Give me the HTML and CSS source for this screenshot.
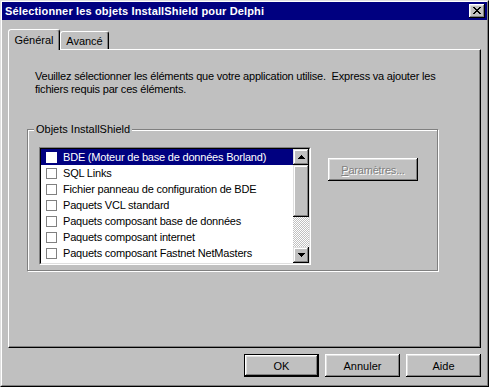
FILE: index.html
```html
<!DOCTYPE html>
<html lang="fr">
<head>
<meta charset="utf-8">
<title>Sélectionner les objets InstallShield pour Delphi</title>
<link rel="stylesheet" href="styles.css">
</head>
<body>
<div class="window">
  <div class="window-inner">
    <div class="titlebar">
      <span class="title">Sélectionner les objets InstallShield pour Delphi</span>
      <button class="close" type="button" aria-label="Fermer">
        <svg width="8" height="7" viewBox="0 0 8 7" shape-rendering="crispEdges"><path fill="#000" d="M0 0h2v1h-2z M6 0h2v1h-2z M1 1h2v1h-2z M5 1h2v1h-2z M2 2h4v1h-4z M3 3h2v1h-2z M2 4h4v1h-4z M1 5h2v1h-2z M5 5h2v1h-2z M0 6h2v1h-2z M6 6h2v1h-2z"/></svg>
      </button>
    </div>
    <div class="content">
      <div class="tabs">
        <div class="tab tab-active">Général</div>
        <div class="tab">Avancé</div>
      </div>
      <div class="panel">
        <p class="intro">Veuillez sélectionner les éléments que votre application utilise.&nbsp; Express va ajouter les<br>fichiers requis par ces éléments.</p>
        <fieldset class="group">
          <legend class="group-label">Objets InstallShield</legend>
          <div class="group-body">
            <div class="listbox">
              <ul class="items">
                <li class="item item-selected"><span class="check"></span>BDE (Moteur de base de données Borland)</li>
                <li class="item"><span class="check"></span>SQL Links</li>
                <li class="item"><span class="check"></span>Fichier panneau de configuration de BDE</li>
                <li class="item"><span class="check"></span>Paquets VCL standard</li>
                <li class="item"><span class="check"></span>Paquets composant base de données</li>
                <li class="item"><span class="check"></span>Paquets composant internet</li>
                <li class="item"><span class="check"></span>Paquets composant Fastnet NetMasters</li>
                <li class="item"><span class="check"></span>Paquets composant Decision Cube</li>
              </ul>
              <div class="scrollbar">
                <div class="sb-btn">
                  <svg width="7" height="4" viewBox="0 0 7 4" shape-rendering="crispEdges"><path fill="#000" d="M3 0h1v1h-1z M2 1h3v1h-3z M1 2h5v1h-5z M0 3h7v1h-7z"/></svg>
                </div>
                <div class="sb-thumb"></div>
                <div class="sb-track"></div>
                <div class="sb-btn">
                  <svg width="7" height="4" viewBox="0 0 7 4" shape-rendering="crispEdges"><path fill="#000" d="M0 0h7v1h-7z M1 1h5v1h-5z M2 2h3v1h-3z M3 3h1v1h-1z"/></svg>
                </div>
              </div>
            </div>
            <button class="btn btn-disabled params" type="button" disabled><span class="ul">P</span>aramètres...</button>
          </div>
        </fieldset>
      </div>
      <div class="actions">
        <button class="btn btn-default" type="button">OK</button>
        <button class="btn" type="button">Annuler</button>
        <button class="btn" type="button">Aide</button>
      </div>
    </div>
  </div>
</div>
</body>
</html>
```
FILE: styles.css
```css
* { box-sizing: border-box; }
html, body { margin: 0; padding: 0; background: #c0c0c0; }
body {
  font-family: "Liberation Sans", Arial, sans-serif;
  font-size: 11px;
  color: #000;
}
.window {
  width: 489px;
  height: 387px;
  border: 1px solid;
  border-color: #dfdfdf #000 #000 #dfdfdf;
  background: #c0c0c0;
}
.window-inner {
  height: 100%;
  border: 1px solid;
  border-color: #fff #808080 #808080 #fff;
  display: flex;
  flex-direction: column;
}
.titlebar {
  height: 18px;
  background: #000080;
  display: flex;
  align-items: center;
  justify-content: space-between;
  padding: 0 2px 0 3px;
}
.title {
  color: #fff;
  font-weight: bold;
  font-size: 11px;
  letter-spacing: 0.15px;
  white-space: nowrap;
}
.close {
  width: 16px;
  height: 14px;
  padding: 0;
  margin: 0;
  border: 0;
  background: #c0c0c0;
  box-shadow: inset -1px -1px 0 #000, inset 1px 1px 0 #fff, inset -2px -2px 0 #808080, inset 2px 2px 0 #dfdfdf;
  display: flex;
  align-items: center;
  justify-content: center;
  padding-bottom: 1px;
}
.close svg { display: block; }
.content {
  flex: 1;
  padding: 9px 6px 8px 6px;
  display: flex;
  flex-direction: column;
}
.tabs {
  height: 20px;
  display: flex;
  align-items: flex-end;
  position: relative;
  z-index: 1;
}
.tab {
  height: 18px;
  padding: 0 5px 0 5px;
  width: 49px;
  border: 1px solid;
  border-bottom: 0;
  border-color: #fff #000 transparent #fff;
  border-radius: 3px 3px 0 0;
  box-shadow: inset -1px 0 0 #808080;
  background: #c0c0c0;
  display: flex;
  align-items: center;
  justify-content: center;
  padding-top: 1px;
}
.tab-active {
  width: 52px;
  height: 21px;
  margin-bottom: -1px;
  padding-bottom: 2px;
}
.panel {
  height: 299px;
  border: 1px solid;
  border-color: #fff #000 #000 #fff;
  box-shadow: inset -1px -1px 0 #808080;
  padding: 20px 0 0 18px;
}
.intro {
  margin: 0 0 0 8px;
  line-height: 13px;
  letter-spacing: -0.2px;
  white-space: nowrap;
}
.group {
  margin: 27px 0 0 0;
  width: 411px;
  height: 148px;
  padding: 0;
  border: 1px solid #808080;
  box-shadow: inset 1px 1px 0 #fff, 1px 1px 0 #fff;
  min-width: 0;
}
.group-label {
  margin-left: 6px;
  padding: 0 2px;
  line-height: 13px;
  background: #c0c0c0;
}
.group-body {
  display: flex;
  align-items: flex-start;
  padding: 11px 0 0 11px;
}
.listbox {
  width: 272px;
  height: 118px;
  border: 1px solid;
  border-color: #808080 #fff #fff #808080;
  display: flex;
  background: #fff;
  overflow: hidden;
  position: relative;
}
.listbox::before {
  content: "";
  position: absolute;
  inset: 0;
  border: 1px solid;
  border-color: #000 #dfdfdf #dfdfdf #000;
  pointer-events: none;
  z-index: 2;
}
.items {
  list-style: none;
  margin: 1px 0 0 1px;
  padding: 0;
  flex: 1;
  overflow: hidden;
}
.item {
  height: 16px;
  display: flex;
  align-items: center;
  white-space: nowrap;
  padding-left: 5px;
  letter-spacing: -0.2px;
}
.check {
  width: 11px;
  height: 11px;
  border: 1px solid #808080;
  background: #fff;
  margin-right: 6px;
  flex: none;
}
.item-selected { background: #000080; color: #fff; }
.item-selected .check { border-color: #fff; }
.scrollbar {
  width: 16px;
  margin: 1px 1px 1px 0;
  display: flex;
  flex-direction: column;
  flex: none;
}
.sb-btn, .sb-thumb {
  background: #c0c0c0;
  box-shadow: inset -1px -1px 0 #000, inset 1px 1px 0 #dfdfdf, inset -2px -2px 0 #808080, inset 2px 2px 0 #fff;
}
.sb-btn {
  height: 16px;
  display: flex;
  align-items: center;
  justify-content: center;
  flex: none;
}
.sb-btn svg { display: block; }
.sb-thumb { height: 52px; flex: none; }
.sb-track {
  flex: 1;
  background: repeating-conic-gradient(#c0c0c0 0 25%, #fff 0 50%) 0 0 / 2px 2px;
}
.btn {
  width: 75px;
  height: 23px;
  margin: 0;
  padding: 0;
  border: 0;
  background: #c0c0c0;
  font: inherit;
  color: #000;
  box-shadow: inset -1px -1px 0 #000, inset 1px 1px 0 #fff, inset -2px -2px 0 #808080, inset 2px 2px 0 #dfdfdf;
}
.btn-default {
  box-shadow: inset 0 0 0 1px #000, inset -2px -2px 0 #000, inset 2px 2px 0 #fff, inset -3px -3px 0 #808080, inset 3px 3px 0 #dfdfdf;
}
.params {
  width: 90px;
  margin: 11px 0 0 17px;
  letter-spacing: -0.2px;
}
.btn-disabled {
  color: #808080;
  text-shadow: 1px 1px 0 #fff;
}
.ul { text-decoration: underline; }
.actions {
  margin-top: 6px;
  display: flex;
  justify-content: flex-end;
  gap: 6px;
}
```
